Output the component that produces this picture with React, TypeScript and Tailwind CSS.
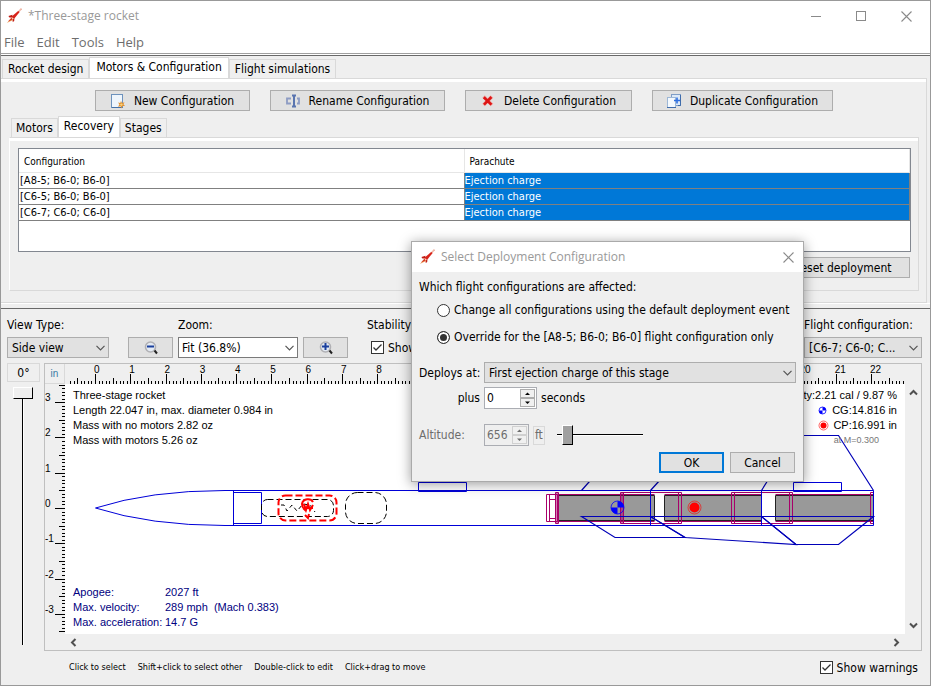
import { useState } from "react";
import type { ReactNode } from "react";

const UI = "font-['DejaVu_Sans_Condensed','DejaVu_Sans',sans-serif]";
const BUTTON =
  "flex h-[21px] items-center justify-center border border-[#adadad] bg-[#e1e1e1] whitespace-nowrap";

function RocketIcon() {
  return (
    <svg width="16" height="16" viewBox="0 0 16 16" aria-hidden="true">
      <path d="M15.5 0.5 L11 5.5" stroke="#f0b8a8" strokeWidth="1.6" />
      <path d="M12.2 3 L13.6 4 L8 11 L5.4 8.8 Z" fill="#d8231a" />
      <path d="M6.5 6.8 L2.4 8 L3.4 9.6 L6 9.4 Z M8.4 10.4 L8.2 13 L6.8 14 L6.4 11.4 Z" fill="#c01c14" />
      <path d="M6 9.4 L0.8 15 L7 12 Z" fill="#efa05c" />
      <path d="M5.6 9.6 L2 13.6 L6.4 11.8 Z" fill="#d43a24" />
    </svg>
  );
}

function CloseIcon() {
  return (
    <svg width="11" height="11" viewBox="0 0 11 11" aria-hidden="true">
      <path d="M0.5 0.5 L10.5 10.5 M10.5 0.5 L0.5 10.5" stroke="#8a8a8a" strokeWidth="1.1" />
    </svg>
  );
}

function NewIcon() {
  return (
    <svg width="16" height="16" viewBox="0 0 16 16" aria-hidden="true">
      <rect x="1.5" y="1.5" width="11" height="13" fill="#eef5fc" stroke="#6d92bd" />
      <path d="M2 14.5 H12.5" stroke="#4571a8" />
      <path
        d="M11 8 L12 10 L14.5 9.2 L13.4 11.3 L15 13 L12.6 13 L11.5 15.4 L10.6 13.2 L8 13.8 L9.4 11.6 L8 9.4 L10.2 10 Z"
        fill="#e0902f"
      />
      <circle cx="11.4" cy="11.6" r="1.2" fill="#f9d27c" />
    </svg>
  );
}

function RenameIcon() {
  return (
    <svg width="16" height="16" viewBox="0 0 16 16" fill="none" aria-hidden="true">
      <path d="M6 5.5 H2 V10.5 H6 M12 5.5 H14 V10.5 H12" stroke="#8d9cc4" strokeWidth="1.8" />
      <path d="M9 3 V13 M7 2.5 H11 M7 13.5 H11" stroke="#5a75b0" strokeWidth="2" />
    </svg>
  );
}

function DeleteIcon() {
  return (
    <svg width="16" height="16" viewBox="0 0 16 16" fill="none" aria-hidden="true">
      <path d="M3.5 3.5 L12 12 M12 3.5 L3.5 12" stroke="#efa5a2" strokeWidth="3.6" />
      <path d="M3.8 4.2 L11.4 11.6 M11.4 4 L4 11.6" stroke="#dd1414" strokeWidth="2.6" />
    </svg>
  );
}

function DuplicateIcon() {
  return (
    <svg width="16" height="16" viewBox="0 0 16 16" aria-hidden="true">
      <rect x="5.5" y="1.5" width="9" height="11" fill="#dce9f8" stroke="#7f9dc6" />
      <path d="M14.5 2 V12.5 H12" stroke="#3f6cab" fill="none" />
      <rect x="1.5" y="4.5" width="8" height="10" fill="#f4f9fe" stroke="#9db7d6" />
      <path d="M1 14.5 H10" stroke="#3f6cab" />
      <path d="M11 4.5 V10.5 M8 7.5 H14" stroke="#2f6fe0" strokeWidth="1.6" />
    </svg>
  );
}

function ZoomIcon({ plus = false }: { plus?: boolean }) {
  return (
    <svg width="16" height="16" viewBox="0 0 16 16" fill="none" aria-hidden="true">
      <circle cx="7.5" cy="7" r="5" fill="#e4ebf4" stroke="#b0b0b4" strokeWidth="1.6" />
      <path d="M11.5 10.5 L14 13.5" stroke="#222" strokeWidth="2" />
      <path d="M4 6.500 H11" stroke="#1b3f9c" strokeWidth="2" />
      {plus && <path d="M7.5 3 V10" stroke="#1b3f9c" strokeWidth="2" />}
    </svg>
  );
}

function Check({ id, label, defaultChecked }: { id: string; label: string; defaultChecked?: boolean }) {
  return (
    <label htmlFor={id} className="flex items-center gap-1 whitespace-nowrap">
      <span className="grid size-[13px] place-items-center">
        <input
          id={id}
          type="checkbox"
          defaultChecked={defaultChecked}
          className="peer col-start-1 row-start-1 size-[13px] appearance-none border border-[#333] bg-white"
        />
        <svg
          className="pointer-events-none invisible col-start-1 row-start-1 peer-checked:visible"
          width="11"
          height="11"
          viewBox="0 0 11 11"
          fill="none"
          aria-hidden="true"
        >
          <path d="M1.5 5.5 L4 8 L9.5 2.5" stroke="#333" strokeWidth="1.3" />
        </svg>
      </span>
      {label}
    </label>
  );
}

function Dropdown({
  id,
  value,
  className,
  white = false,
}: {
  id: string;
  value: string;
  className: string;
  white?: boolean;
}) {
  return (
    <span className={`grid items-center ${className}`}>
      <select
        id={id}
        className={`col-start-1 row-start-1 h-[21px] w-full appearance-none border pr-5 outline-none ${
          white ? "border-[#7a7a7a] bg-white pl-[3px]" : "border-[#adadad] bg-[#e1e1e1] pl-1"
        }`}
      >
        <option>{value}</option>
      </select>
      <svg
        className="pointer-events-none col-start-1 row-start-1 mr-1 justify-self-end"
        width="9"
        height="6"
        viewBox="0 0 9 6"
        fill="none"
        aria-hidden="true"
      >
        <path d="M0.5 0.8 L4.5 4.8 L8.5 0.8" stroke="#555" strokeWidth="1.2" />
      </svg>
    </span>
  );
}

function Tab({ selected = false, small = false, children }: { selected?: boolean; small?: boolean; children: ReactNode }) {
  return (
    <button
      role="tab"
      aria-selected={selected}
      className={`whitespace-nowrap border border-b-0 border-[#d9d9d9] ${
        selected
          ? `h-[21px] bg-white pb-[2px] ${small ? "px-[5px]" : "px-[6px]"}`
          : `h-[19px] bg-[#efefef] ${small ? "px-1" : "px-[5px]"}`
      }`}
    >
      {children}
    </button>
  );
}

const ROWS = ["[A8-5; B6-0; B6-0]", "[C6-5; B6-0; B6-0]", "[C6-7; C6-0; C6-0]"];

function ConfigurationTable() {
  return (
    <div className="h-[104px] border border-[#828790] bg-white">
      <table className="w-full table-fixed border-separate border-spacing-0 text-left text-[11px]">
        <thead className="text-[10px]">
          <tr className="h-[24px]">
            <th className="border-r border-b border-[#e6e6e6] p-0 pt-[2px] pl-[5px] font-normal">Configuration</th>
            <th className="border-r border-b border-[#e6e6e6] p-0 pt-[2px] pl-[5px] font-normal">Parachute</th>
          </tr>
        </thead>
        <tbody className="leading-[15px]">
          {ROWS.map((row) => (
            <tr key={row} className="h-[16px]">
              <td className="border-r border-b border-[#808080] p-0 pl-px">{row}</td>
              <td className="border-r border-b border-[#808080] bg-[#0078d7] p-0 text-white">Ejection charge</td>
            </tr>
          ))}
        </tbody>
      </table>
    </div>
  );
}

const INCH = 35.27;

function TopRuler() {
  const ticks = Array.from({ length: 237 }, (_, i) => i - 7);
  return (
    <svg className="h-[20px] w-full" aria-hidden="true">
      {ticks.map((i) => {
        const x = Math.round(30 + (i * INCH) / 10) + 0.5;
        const len = i % 10 === 0 ? 10 : i % 5 === 0 ? 6 : 3;
        return <path key={i} d={`M${x} ${20 - len} V20`} stroke="#000" />;
      })}
      {Array.from({ length: 23 }, (_, i) => (
        <text key={i} x={29 + i * INCH} y="9" fontSize="10">
          {i}
        </text>
      ))}
    </svg>
  );
}

function SideRuler() {
  const ticks = Array.from({ length: 71 }, (_, i) => i - 35);
  return (
    <svg className="h-full w-[20px]" aria-hidden="true">
      {ticks.map((i) => {
        const y = Math.round(124 - (i * INCH) / 10) + 0.5;
        const len = i % 10 === 0 ? 10 : i % 5 === 0 ? 6 : 3;
        return <path key={i} d={`M${20 - len} ${y} H20`} stroke="#000" />;
      })}
      {[3, 2, 1, 0, -1, -2, -3].map((n) => (
        <text key={n} x="0" y={123 - n * INCH} fontSize="10">
          {n}
        </text>
      ))}
    </svg>
  );
}

function CenterOfGravity({ x, y, r }: { x: number; y: number; r: number }) {
  return (
    <g transform={`translate(${x} ${y})`}>
      <circle r={r} fill="none" stroke="#0000ff" strokeWidth="0.8" />
      <path d={`M0 0 V${-r} A${r} ${r} 0 0 1 ${r} 0 Z`} fill="#0000ff" />
      <path d={`M0 0 V${r} A${r} ${r} 0 0 1 ${-r} 0 Z`} fill="#0000ff" />
    </g>
  );
}

function CenterOfPressure({ x, y, r }: { x: number; y: number; r: number }) {
  return (
    <g transform={`translate(${x} ${y})`}>
      <circle r={r} fill="none" stroke="#ff0000" strokeWidth="0.6" />
      <circle r={r - 1.5} fill="#ff0000" />
    </g>
  );
}

function RocketFigure() {
  return (
    <svg className="block h-full w-full" fill="none" aria-label="Side view of the rocket">
      <g transform="translate(-65 -384)">
        <g fill="#999999" stroke="#222">
          <path d="M557.5 495.5 H654.5 V520.5 H557.5 Z M664.5 495.5 H761.5 V520.5 H664.5 Z M775.5 495.5 H873.5 V520.5 H775.5 Z" />
        </g>
        <g stroke="#a8006a">
          <path d="M546.5 494.5 H557.5 V521.5 H546.5 Z M549.5 494.5 V521.5 M549.5 499.5 H555 M549.5 518.5 H555" />
          <path d="M555.5 492.5 H558.5 V523.5 H555.5 Z M557 492.5 V523.5" />
          <path d="M557.5 494.5 H654.5 M664.5 494.5 H761.5 M775.5 494.5 H873.5 M557.5 521.5 H654.5 M664.5 521.5 H761.5 M775.5 521.5 H873.5" />
          <path d="M620.5 492.5 H681.5 V523.5 H620.5 Z M623.5 492.5 V523.5 M678.5 492.5 V523.5 M622 492.5 V523.5" />
          <path d="M731.5 492.5 H792.5 V523.5 H731.5 Z M734.5 492.5 V523.5 M789.5 492.5 V523.5" />
          <path d="M870.5 492.5 H873.5 V523.5 H870.5 Z" />
        </g>
        <g stroke="#0000d8">
          <path d="M95.5 508 Q150 490.5 225 490.5 H873.5 V525.5 H225 Q150 525.5 95.5 508 Z" />
          <path d="M233.5 490.5 V525.5 M233.5 492.5 H261.5 V523.5 H233.5 M650.5 490.5 V525.5 M761.5 490.5 V525.5" />
          <path d="M418.5 482.5 H466.5 V491.5 H418.5 Z M793.5 482.5 H841.5 V491.5 H793.5 Z" />
        </g>
        <g stroke="#0000b8" strokeWidth="1.2">
          <path d="M581.5 516.5 L615 537.5 H685 L650.5 516.5 Z" />
          <path d="M650.5 516.5 L685 537.5 L796 544.5 L761.5 516.5 Z" />
          <path d="M761.5 516.5 L796 544.5 H838.5 L873.5 516.5 Z" />
          <path d="M581.5 490.5 L615 452.5 H685 L650.5 490.5 L685 452 L796 435.5" />
          <path d="M761.5 490.5 L796 435.5 H838.5 L873.5 490.5" />
        </g>
        <g stroke="#000" strokeDasharray="6 3">
          <rect x="261.5" y="499.5" width="72" height="17" rx="6" />
          <rect x="345.5" y="492.5" width="41" height="31" rx="12" />
          <path d="M281 505 L284 505 L287 511 L292 505 L297 511 L303 504 L310 505 L315 512" strokeDasharray="4 3" />
        </g>
        <g stroke="#ff0000" strokeWidth="2">
          <rect x="278.5" y="495.5" width="58" height="25" rx="7" strokeDasharray="7 3" />
          <path d="M313 502 C311 498 303 498 302 504 C302 509 305 509 306 511 M304 504 L306 510 L308 504 L310 510 L313 505 M306 508 H313 M305 515 L308 518 L309 514" />
        </g>
        <CenterOfGravity x={617.5} y={507.5} r={6.5} />
        <CenterOfPressure x={694.5} y={507.5} r={6.5} />
      </g>
    </svg>
  );
}

function Arrow({ d }: { d: string }) {
  return (
    <svg width="9" height="9" viewBox="0 0 9 9" fill="none" aria-hidden="true">
      <path d={d} stroke="#505050" strokeWidth="2" />
    </svg>
  );
}

function FigurePanel() {
  return (
    <div className="grid min-h-0 min-w-0 flex-1 grid-cols-[20px_1fr_16px] grid-rows-[20px_1fr_16px] border border-[#bfbfbf] font-['Liberation_Sans',Arial,sans-serif]">
      <div className="flex items-center justify-center border-r border-b border-[#d9d9d9] text-[10px] text-[#3a7ca5]">in</div>
      <div className="col-span-2 mr-4 overflow-hidden">
        <TopRuler />
      </div>
      <div className="overflow-hidden">
        <SideRuler />
      </div>
      <div className="relative overflow-hidden bg-white text-[11px] leading-[15px]">
        <RocketFigure />
        <div className="absolute top-1 left-2 whitespace-nowrap">
          <p>Three-stage rocket</p>
          <p>Length 22.047 in, max. diameter 0.984 in</p>
          <p>Mass with no motors 2.82 oz</p>
          <p>Mass with motors 5.26 oz</p>
        </div>
        <div className="absolute top-1 right-2 flex flex-col items-end whitespace-nowrap">
          <p>Stability:2.21 cal / 9.87 %</p>
          <p className="flex items-center gap-1">
            <svg width="11" height="11" aria-hidden="true">
              <CenterOfGravity x={5.5} y={5.5} r={3.5} />
            </svg>
            CG:14.816 in
          </p>
          <p className="flex items-center gap-1">
            <svg width="11" height="11" aria-hidden="true">
              <CenterOfPressure x={5.5} y={5.5} r={4.5} />
            </svg>
            CP:16.991 in
          </p>
          <p className="mr-[18px] text-[9px] text-[#777]">at M=0.300</p>
        </div>
        <dl className="absolute bottom-[4px] left-2 grid grid-cols-[92px_auto] whitespace-nowrap text-[#000080]">
          <dt>Apogee:</dt>
          <dd>2027 ft</dd>
          <dt>Max. velocity:</dt>
          <dd>289 mph&nbsp; (Mach 0.383)</dd>
          <dt>Max. acceleration:</dt>
          <dd>14.7 G</dd>
        </dl>
      </div>
      <div className="flex flex-col items-center justify-between py-1">
        <Arrow d="M1 6.5 L4.5 3 L8 6.5" />
        <Arrow d="M1 2.5 L4.5 6 L8 2.5" />
      </div>
      <div className="col-start-2 flex items-center justify-between px-1">
        <Arrow d="M6.5 1 L3 4.5 L6.5 8" />
        <Arrow d="M2.5 1 L6 4.5 L2.5 8" />
      </div>
    </div>
  );
}

function Spinner({ id, value, className, disabled = false }: { id: string; value: string; className: string; disabled?: boolean }) {
  return (
    <span className={`flex h-[22px] border border-[#abadb3] p-px ${disabled ? "bg-[#efefef] text-[#6d6d6d]" : "bg-white"} ${className}`}>
      <input id={id} defaultValue={value} disabled={disabled} className="w-0 min-w-0 flex-1 pl-px outline-none" />
      <span className="flex w-[15px] flex-col">
        {["M1 3 L3.5 0.5 L6 3 Z", "M1 0.5 L3.5 3 L6 0.5 Z"].map((d, i) => (
          <button
            key={d}
            disabled={disabled}
            aria-label={i === 0 ? "Increase" : "Decrease"}
            className={`flex flex-1 items-center justify-center border bg-[#f0f0f0] ${
              disabled ? "border-[#d0d0d0]" : "border-[#adadad]"
            }`}
          >
            <svg width="7" height="4" viewBox="0 0 7 4" aria-hidden="true">
              <path d={d} fill={disabled ? "#6d6d6d" : "#000"} />
            </svg>
          </button>
        ))}
      </span>
    </span>
  );
}

const RADIO =
  "size-[13px] appearance-none rounded-full border border-[#333] bg-white checked:bg-[#333] checked:shadow-[inset_0_0_0_2px_white]";

function DeploymentDialog() {
  return (
    <div
      role="dialog"
      aria-labelledby="dialog-title"
      className="absolute top-[240px] left-[410px] w-[393px] border border-[#aaaaaa] bg-[#efefef] whitespace-nowrap shadow-[0_2px_12px_rgba(0,0,0,0.4)]"
    >
      <div className="flex h-[30px] items-center bg-white pr-[9px] pl-[7px]">
        <RocketIcon />
        <h2 id="dialog-title" className="ml-1.5 flex-1 font-['Open_Sans',sans-serif] text-[12px] text-[#999]">
          Select Deployment Configuration
        </h2>
        <button aria-label="Close dialog">
          <CloseIcon />
        </button>
      </div>
      <div className="flex flex-col px-[7px] pt-[7px] pb-[8px]">
        <p className="leading-[17px]">Which flight configurations are affected:</p>
        <label className="mt-1.5 ml-[18px] flex items-center gap-1 leading-[17px]">
          <input type="radio" name="scope" className={RADIO} />
          Change all configurations using the default deployment event
        </label>
        <label className="mt-[10px] ml-[18px] flex items-center gap-1 leading-[17px]">
          <input type="radio" name="scope" defaultChecked className={RADIO} />
          Override for the [A8-5; B6-0; B6-0] flight configuration only
        </label>
        <div className="mt-4 grid grid-cols-[61px_1fr] items-center gap-x-1 gap-y-1">
          <label htmlFor="deploys">Deploys at:</label>
          <Dropdown id="deploys" value="First ejection charge of this stage" className="w-full" />
          <label htmlFor="delay" className="justify-self-end">
            plus
          </label>
          <span className="flex items-center gap-1">
            <Spinner id="delay" value="0" className="w-[53px]" />
            seconds
          </span>
        </div>
        <div className="mt-[15px] grid grid-cols-[61px_1fr] items-center gap-x-1 text-[#6d6d6d]">
          <label htmlFor="altitude">Altitude:</label>
          <span className="flex items-center">
            <Spinner id="altitude" value="656" disabled className="w-[45px]" />
            <span className="ml-1 border border-[#d9d9d9] px-px leading-[17px]">ft</span>
            <input
              type="range"
              aria-label="Altitude"
              defaultValue="7"
              className="ml-3 h-[20px] w-[86px] appearance-none bg-[linear-gradient(to_bottom,#000_50%,#fff_50%)] bg-[length:100%_2px] bg-center bg-no-repeat [&::-webkit-slider-thumb]:h-[20px] [&::-webkit-slider-thumb]:w-[11px] [&::-webkit-slider-thumb]:appearance-none [&::-webkit-slider-thumb]:border [&::-webkit-slider-thumb]:border-t-white [&::-webkit-slider-thumb]:border-r-black [&::-webkit-slider-thumb]:border-b-black [&::-webkit-slider-thumb]:border-l-white [&::-webkit-slider-thumb]:bg-[#a0a0a0]"
            />
          </span>
        </div>
        <div className="mt-[6px] flex justify-end gap-1.5 pr-px">
          <button className="h-[21px] w-[65px] border-2 border-[#0078d7] bg-[#e1e1e1]">OK</button>
          <button className="h-[21px] w-[65px] border border-[#adadad] bg-[#e1e1e1]">Cancel</button>
        </div>
      </div>
    </div>
  );
}

export default function App() {
  const [angle, setAngle] = useState(0);
  return (
    <div className={`relative flex h-screen flex-col overflow-hidden border border-[#999] bg-[#efefef] text-[12px] text-black ${UI}`}>
      <header className="bg-white">
        <div className="flex h-[30px] items-center pr-[18px] pl-[5px] font-['Open_Sans',sans-serif] text-[#999]">
          <RocketIcon />
          <h1 className="ml-1.5 flex-1 text-[12px]">*Three-stage rocket</h1>
          <div className="flex items-center gap-[35px]">
            <button aria-label="Minimize" className="flex h-3 items-center">
              <span className="h-px w-[10px] bg-[#8a8a8a]" />
            </button>
            <button aria-label="Maximize" className="size-[10px] border border-[#8a8a8a]" />
            <button aria-label="Close">
              <CloseIcon />
            </button>
          </div>
        </div>
        <nav className="flex h-[22px] items-center gap-[12px] pt-[2px] pl-[3px] font-['Open_Sans',sans-serif] text-[13px] text-[#6d6d6d]">
          <button>File</button>
          <button>Edit</button>
          <button>Tools</button>
          <button>Help</button>
        </nav>
      </header>
      <div className="h-[3px] border-y border-t-[#a0a0a0] border-b-[#696969] bg-white" />

      <main className="pt-px pr-[3px]">
        <div role="tablist" className="flex items-end pl-px">
          <Tab>Rocket design</Tab>
          <Tab selected>Motors &amp; Configuration</Tab>
          <Tab>Flight simulations</Tab>
        </div>
        <section className="border border-l-0 border-[#d9d9d9] pr-[7px] pb-[11px]">
          <div className="-mr-[7px] h-[3px] bg-white" />
          <div className="flex flex-wrap justify-center gap-5 pt-2 pl-[7px]">
            <button className={`${BUTTON} w-[155px] gap-2`}>
              <NewIcon />
              New Configuration
            </button>
            <button className={`${BUTTON} w-[175px] gap-2`}>
              <RenameIcon />
              Rename Configuration
            </button>
            <button className={`${BUTTON} w-[167px] gap-2`}>
              <DeleteIcon />
              Delete Configuration
            </button>
            <button className={`${BUTTON} w-[181px] gap-2`}>
              <DuplicateIcon />
              Duplicate Configuration
            </button>
          </div>
          <div role="tablist" className="mt-[5px] flex items-end pl-[10px]">
            <Tab small>Motors</Tab>
            <Tab small selected>
              Recovery
            </Tab>
            <Tab small>Stages</Tab>
          </div>
          <div className="ml-2 border border-[#d9d9d9] border-l-white pb-3">
            <div className="h-[3px] bg-white" />
            <div className="px-[7px] pt-[7px] pl-2">
              <ConfigurationTable />
              <div className="mt-[5px] flex justify-end pr-px">
                <button className={`${BUTTON} w-[135px]`}>Reset deployment</button>
              </div>
            </div>
          </div>
        </section>
      </main>
      <div className="h-[6px] border-t border-b border-t-white border-b-[#696969]" />

      <section className="flex min-h-0 flex-1 flex-col px-1.5 pr-2">
        <div className="flex items-end pt-[7px]">
          <div className="flex w-[102px] flex-col gap-[3px]">
            <label htmlFor="view">View Type:</label>
            <Dropdown id="view" value="Side view" className="w-full" />
          </div>
          <button aria-label="Zoom out" className={`${BUTTON} ml-[19px] w-[45px]`}>
            <ZoomIcon />
          </button>
          <div className="ml-[5px] flex w-[120px] flex-col gap-[3px]">
            <label htmlFor="zoom">Zoom:</label>
            <Dropdown id="zoom" value="Fit (36.8%)" white className="w-full" />
          </div>
          <button aria-label="Zoom in" className={`${BUTTON} ml-[5px] w-[45px]`}>
            <ZoomIcon plus />
          </button>
          <div className="ml-[19px] flex flex-col gap-[3px]">
            <span>Stability:</span>
            <div className="flex h-[21px] items-center pl-1">
              <Check id="show-cgcp" label="Show CG/CP" defaultChecked />
            </div>
          </div>
          <div className="ml-auto flex w-[118px] flex-col gap-[3px]">
            <label htmlFor="flight" className="whitespace-nowrap">
              Flight configuration:
            </label>
            <Dropdown id="flight" value="[C6-7; C6-0; C..." className="w-full" />
          </div>
        </div>
        <div className="mt-[5px] flex min-h-0 flex-1">
          <div className="flex w-[37px] flex-col">
            <output className="flex h-[19px] w-[33px] items-center justify-center border border-[#d9d9d9]">{angle}°</output>
            <input
              type="range"
              aria-label="Rotation"
              min={0}
              max={359}
              value={angle}
              onChange={(event) => setAngle(Number(event.target.value))}
              className="mt-[5px] mb-[6px] ml-[6px] min-h-0 w-[20px] flex-1 appearance-none bg-[linear-gradient(to_right,#000_50%,#fff_50%)] bg-[length:2px_100%] bg-center bg-no-repeat [writing-mode:vertical-lr] [&::-webkit-slider-thumb]:h-[12px] [&::-webkit-slider-thumb]:w-[20px] [&::-webkit-slider-thumb]:appearance-none [&::-webkit-slider-thumb]:border [&::-webkit-slider-thumb]:border-t-white [&::-webkit-slider-thumb]:border-r-black [&::-webkit-slider-thumb]:border-b-black [&::-webkit-slider-thumb]:border-l-white [&::-webkit-slider-thumb]:bg-[#efefef]"
            />
          </div>
          <FigurePanel />
        </div>
        <footer className="flex h-[34px] items-center justify-between pb-px pl-[62px]">
          <div className="flex gap-3 text-[9px]">
            <span>Click to select</span>
            <span>Shift+click to select other</span>
            <span>Double-click to edit</span>
            <span>Click+drag to move</span>
          </div>
          <div className="pr-1">
            <Check id="warnings" label="Show warnings" defaultChecked />
          </div>
        </footer>
      </section>

      <DeploymentDialog />
    </div>
  );
}
